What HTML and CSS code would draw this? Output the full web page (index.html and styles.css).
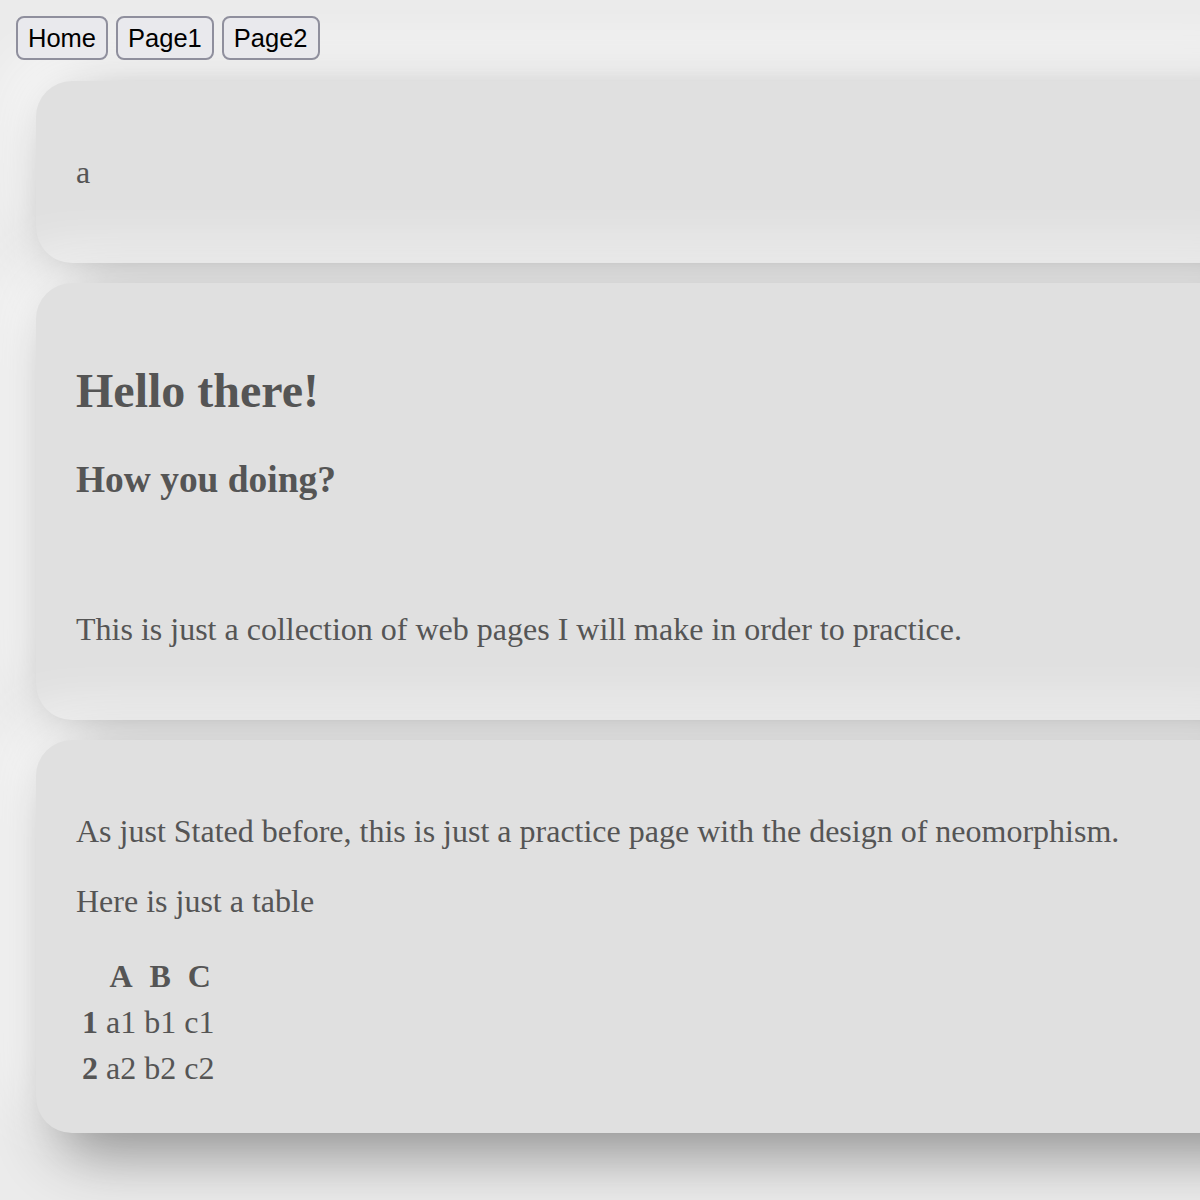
FILE: index.html
```html
<!DOCTYPE html>
<html>
<head>
<meta charset="utf-8">
<title>Practice</title>
<link rel="stylesheet" href="styles.css">
</head>
<body>
<div class="page">
<div class="nav"><button class="nav-btn">Home</button> <button class="nav-btn">Page1</button> <button class="nav-btn">Page2</button></div>
<div class="card">
  <p>a</p>
</div>
<div class="card">
  <h1 class="title">Hello there!</h1>
  <h3 class="subtitle">How you doing?</h3>
  <p>This is just a collection of web pages I will make in order to practice.</p>
</div>
<div class="card">
  <p>As just Stated before, this is just a practice page with the design of neomorphism.</p>
  <p>Here is just a table</p>
  <table class="grid">
    <tr><th></th><th>A</th><th>B</th><th>C</th></tr>
    <tr><th>1</th><td>a1</td><td>b1</td><td>c1</td></tr>
    <tr><th>2</th><td>a2</td><td>b2</td><td>c2</td></tr>
  </table>
</div>
</div>
</body>
</html>
```

FILE: styles.css
```css
html, body {
  margin: 0;
  padding: 0;
  background: #ebebeb;
}
.page {
  box-sizing: border-box;
  min-height: 100vh;
  padding: 16px;
  overflow: clip;
  font-family: "Liberation Serif", "Times New Roman", serif;
  font-size: 32px;
  line-height: 38px;
  color: #555555;
}
.nav {
  height: 45px;
  line-height: 44px;
}
.nav-btn {
  box-sizing: border-box;
  height: 44px;
  vertical-align: top;
  font-family: "Liberation Sans", Arial, sans-serif;
  font-size: 25.5px;
  line-height: 36px;
  color: #000;
  background: #e9e9ed;
  border: 2px solid #8f8f9d;
  border-radius: 8px;
  padding: 2px 10px;
  margin: 0;
}
.card {
  margin: 20px 0 20px 20px;
  width: 100%;
  padding: 40px;
  background: #e0e0e0;
  border-radius: 36px;
  box-shadow: 20px 20px 60px #8e8e8e, -20px -20px 60px #ffffff;
}
.card p {
  margin: 32px 0;
}
.title {
  font-size: 48px;
  line-height: normal;
  margin: 39.84px 0;
}
.subtitle {
  font-size: 37.44px;
  line-height: normal;
  margin: 37.44px 0 109px;
}
.grid {
  border-spacing: 4px;
  font-size: 32px;
  margin-top: -1px;
}
.grid th, .grid td {
  padding: 2px;
}
```
